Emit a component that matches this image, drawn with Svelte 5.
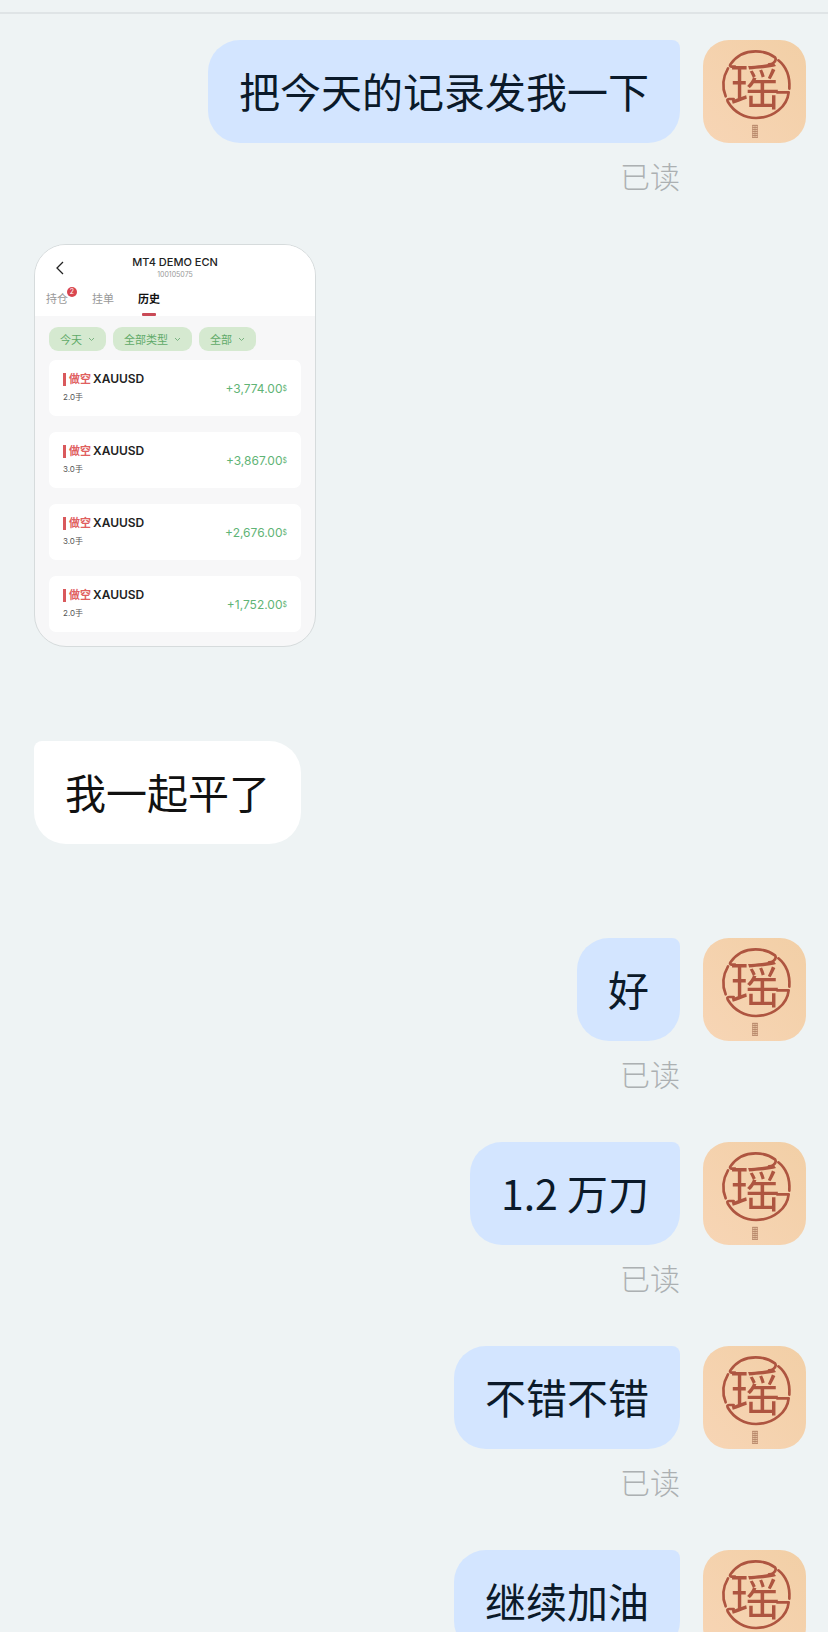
<script lang="ts">
	interface Trade {
		symbol: string;
		lots: string;
		profit: string;
	}

	interface Message {
		side: 'in' | 'out';
		text?: string;
		trades?: Trade[];
		read?: boolean;
	}

	const trades: Trade[] = [
		{ symbol: 'XAUUSD', lots: '2.0手', profit: '+3,774.00' },
		{ symbol: 'XAUUSD', lots: '3.0手', profit: '+3,867.00' },
		{ symbol: 'XAUUSD', lots: '3.0手', profit: '+2,676.00' },
		{ symbol: 'XAUUSD', lots: '2.0手', profit: '+1,752.00' }
	];

	const messages: Message[] = [
		{ side: 'out', text: '把今天的记录发我一下', read: true },
		{ side: 'in', trades },
		{ side: 'in', text: '我一起平了' },
		{ side: 'out', text: '好', read: true },
		{ side: 'out', text: '1.2 万刀', read: true },
		{ side: 'out', text: '不错不错', read: true },
		{ side: 'out', text: '继续加油' }
	];

	const filters = ['今天', '全部类型', '全部'];
</script>

{#snippet avatar()}
	<svg class="avatar" viewBox="0 0 309 309" role="img" aria-label="瑶">
		<defs>
			<linearGradient id="paper" x1="0" y1="1" x2="1" y2="0">
				<stop offset="0" stop-color="#f7d5b5" />
				<stop offset="1" stop-color="#f2cfa6" />
			</linearGradient>
		</defs>
		<rect width="309" height="309" fill="url(#paper)" />
		<!-- seal ring, broken on both sides -->
		<g fill="none" stroke="#ae5540" stroke-width="8" stroke-linecap="round" stroke-linejoin="round">
			<path d="M96 80H86Q78 79 83 72C104 42 130 34 158 34C184 34 204 43 216 52Q222 60 211 69Q207 73 198 73" />
			<path d="M226 61C252 82 261 114 259 146" />
			<path d="M75 85C60 111 57 142 68 169" />
			<path d="M92 177H78Q70 177 75 186C93 217 126 234 159 234C212 234 253 198 257 157H222" />
		</g>
		<text x="156" y="194" text-anchor="middle" class="seal">瑶</text>
		<g fill="none" stroke="#b38265" stroke-width="3">
			<path d="M148 256H164M148 262H164M148 268H164M148 274H164M148 280H164M148 286H164M148 292H164" />
			<path d="M149 255V294M156 257V291M163 255V294" stroke-width="2" />
		</g>
	</svg>
{/snippet}

{#snippet history(rows: Trade[])}
	<article class="phone">
		<header class="phone-head">
			<div class="title-bar">
				<button type="button" class="back" aria-label="返回">
					<svg viewBox="0 0 8 14" width="8" height="14">
						<path d="M7 1L1 7l6 6" fill="none" stroke="#222" stroke-width="1.3" />
					</svg>
				</button>
				<div class="account">
					<h2>MT4 DEMO ECN</h2>
					<p>100105075</p>
				</div>
			</div>
			<nav class="tabs">
				<button type="button" class="tab">持仓<span class="badge">2</span></button>
				<button type="button" class="tab">挂单</button>
				<button type="button" class="tab tab--active">历史</button>
			</nav>
		</header>
		<div class="filters">
			{#each filters as filter}
				<button type="button" class="filter">
					{filter}
					<svg viewBox="0 0 7 5" width="7" height="5">
						<path d="M1 1l2.500 2.500L6 1" fill="none" stroke="#78b380" stroke-width="1" />
					</svg>
				</button>
			{/each}
		</div>
		<ul class="trades">
			{#each rows as row}
				<li class="trade">
					<div>
						<div class="symbol"><span class="short">做空</span>{row.symbol}</div>
						<div class="lots">{row.lots}</div>
					</div>
					<div class="profit">{row.profit}<sup>$</sup></div>
				</li>
			{/each}
		</ul>
	</article>
{/snippet}

<main class="chat">
	{#each messages as message}
		<section class="message message--{message.side}">
			<div class="content">
				{#if message.trades}
					{@render history(message.trades)}
				{:else}
					<p class="bubble bubble--{message.side}">{message.text}</p>
				{/if}
				{#if message.read}
					<span class="status">已读</span>
				{/if}
			</div>
			{#if message.side === 'out'}
				{@render avatar()}
			{/if}
		</section>
	{/each}
</main>

<style>
	:global(body) {
		background: #eef3f4;
	}

	.chat {
		box-sizing: border-box;
		height: 100vh;
		padding: 12px 22px 0 34px;
		overflow: hidden;
		background: #eef3f4;
		font-family: 'Noto Sans CJK SC', sans-serif;
	}

	.chat::before {
		content: '';
		display: block;
		height: 2px;
		margin: 0 -22px 26px -34px;
		background: #dfe4e6;
	}

	.message {
		display: flex;
		align-items: flex-start;
		gap: 23px;
		margin-bottom: 94px;
	}

	.message--out {
		justify-content: flex-end;
		margin-bottom: 48px;
	}

	.content {
		display: flex;
		flex-direction: column;
		align-items: flex-end;
	}

	.bubble {
		margin: 0;
		padding: 20px 31px 22px;
		font-size: 41px;
		line-height: 61px;
		color: #111;
		background: #fff;
		border-radius: 8px 32px 32px 32px;
	}

	.bubble--out {
		color: #0b1a2a;
		background: #d3e5ff;
		border-radius: 32px 8px 32px 32px;
	}

	.status {
		margin-top: 11px;
		font-size: 30px;
		font-weight: 300;
		line-height: 42px;
		color: #acb0b2;
	}

	.avatar {
		flex: none;
		width: 103px;
		height: 103px;
		border-radius: 26px;
	}

	.seal {
		font-family: 'Noto Sans CJK SC', sans-serif;
		font-size: 150px;
		fill: #ae5540;
	}

	.phone {
		box-sizing: border-box;
		width: 282px;
		border: 1px solid #d6dbdc;
		border-radius: 32px;
		overflow: hidden;
		background: #f7f7f8;
		font-family: Inter, 'Noto Sans CJK SC', sans-serif;
	}

	.phone button {
		padding: 0;
		border: 0;
		background: none;
		font-family: inherit;
	}

	.phone-head {
		padding: 10px 11px 0;
		background: #fff;
	}

	.title-bar {
		display: grid;
		grid-template-columns: 18px 1fr 18px;
		align-items: center;
	}

	.back {
		display: flex;
		justify-content: flex-end;
	}

	.account {
		text-align: center;
	}

	.account h2 {
		margin: 0;
		font-size: 11px;
		font-weight: 500;
		line-height: 15px;
		color: #222;
	}

	.account p {
		margin: 0;
		font-size: 7px;
		line-height: 10px;
		color: #999;
	}

	.tabs {
		display: flex;
		gap: 24px;
		margin-top: 9px;
	}

	.phone .tab {
		position: relative;
		height: 27px;
		padding-bottom: 6px;
		font-size: 11px;
		line-height: 21px;
		color: #999;
	}

	.phone .tab--active {
		font-weight: 700;
		color: #111;
	}

	.tab--active::after {
		content: '';
		position: absolute;
		left: 4px;
		right: 4px;
		bottom: 0;
		height: 3px;
		border-radius: 1px;
		background: #c94a56;
	}

	.badge {
		position: absolute;
		top: -2px;
		right: -9px;
		width: 10px;
		height: 10px;
		border-radius: 50%;
		background: #d9464f;
		color: #fff;
		font-size: 7px;
		line-height: 10px;
	}

	.filters {
		display: flex;
		gap: 7px;
		padding: 11px 14px 9px;
	}

	.phone .filter {
		display: flex;
		align-items: center;
		gap: 6px;
		height: 24px;
		padding: 0 11px;
		border-radius: 9px;
		background: #d5e9d0;
		color: #5faa68;
		font-size: 11px;
	}

	.trades {
		display: grid;
		gap: 16px;
		margin: 0;
		padding: 0 14px 14px;
		list-style: none;
	}

	.trade {
		display: flex;
		align-items: center;
		justify-content: space-between;
		height: 56px;
		padding: 0 14px;
		border-radius: 7px;
		background: #fff;
	}

	.symbol {
		display: flex;
		align-items: center;
		font-size: 12px;
		font-weight: 600;
		line-height: 18px;
		color: #222;
	}

	.short {
		margin-right: 2px;
		padding-left: 3px;
		border-left: 3px solid #d9595c;
		font-size: 11px;
		font-weight: 700;
		line-height: 13px;
		color: #e0605f;
	}

	.lots {
		font-size: 8px;
		line-height: 18px;
		color: #555;
	}

	.profit {
		font-size: 12px;
		color: #5fb476;
	}

	.profit sup {
		font-size: 7px;
		line-height: 1;
		vertical-align: 2px;
	}
</style>
